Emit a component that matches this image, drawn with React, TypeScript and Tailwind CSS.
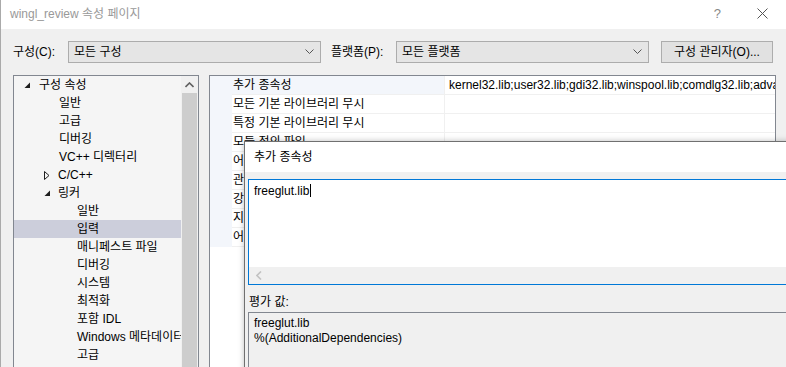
import React from "react";

type TreeItem = { label: string; indent: number; arrow?: "open" | "closed"; selected?: boolean };

const tree: TreeItem[] = [
  { label: "구성 속성", indent: 0, arrow: "open" },
  { label: "일반", indent: 1 },
  { label: "고급", indent: 1 },
  { label: "디버깅", indent: 1 },
  { label: "VC++ 디렉터리", indent: 1 },
  { label: "C/C++", indent: 1, arrow: "closed" },
  { label: "링커", indent: 1, arrow: "open" },
  { label: "일반", indent: 2 },
  { label: "입력", indent: 2, selected: true },
  { label: "매니페스트 파일", indent: 2 },
  { label: "디버깅", indent: 2 },
  { label: "시스템", indent: 2 },
  { label: "최적화", indent: 2 },
  { label: "포함 IDL", indent: 2 },
  { label: "Windows 메타데이터", indent: 2 },
  { label: "고급", indent: 2 },
];

const props = [
  { name: "추가 종속성", value: "kernel32.lib;user32.lib;gdi32.lib;winspool.lib;comdlg32.lib;advapi32.lib;shell32.lib;ole32.lib;oleaut32.lib" },
  { name: "모든 기본 라이브러리 무시", value: "" },
  { name: "특정 기본 라이브러리 무시", value: "" },
  { name: "모듈 정의 파일", value: "" },
  { name: "어셈블리에 모듈 추가", value: "" },
  { name: "관리되는 리소스 파일 포함", value: "" },
  { name: "강제 기호 참조", value: "" },
  { name: "지연 로드된 DLL", value: "" },
  { name: "어셈블리 링크 리소스", value: "" },
];

function Chevron() {
  return (
    <svg width="9" height="6" viewBox="0 0 9 6" className="shrink-0">
      <polyline points="0.5,0.5 4.5,4.5 8.5,0.5" fill="none" stroke="#555" strokeWidth="1" />
    </svg>
  );
}

function Select({ text, width }: { text: string; width: string }) {
  return (
    <div className={`${width} h-[22px] bg-[#e5e5e5] border border-[#acacac] flex items-center pl-[5px] pr-[6px]`}>
      <span className="flex-1">{text}</span>
      <Chevron />
    </div>
  );
}

function Arrow({ kind }: { kind: "open" | "closed" }) {
  if (kind === "open")
    return (
      <svg width="7" height="7" viewBox="0 0 7 7">
        <polygon points="6,0.5 6,6 0.5,6" fill="#1e1e1e" />
      </svg>
    );
  return (
    <svg width="6" height="9" viewBox="0 0 6 9">
      <polygon points="0.5,0.5 5,4.5 0.5,8.5" fill="none" stroke="#1e1e1e" strokeWidth="1" />
    </svg>
  );
}

export default function App() {
  return (
    <div className="relative w-[786px] h-[367px] overflow-hidden bg-[#f0f0f0] border-l border-[#aaaaaa] text-[12px] leading-none text-black font-['Liberation_Sans','Noto_Sans_CJK_KR',sans-serif]">
      {/* title bar */}
      <div className="h-[29px] bg-white flex items-center pl-[9px] pb-[2px] text-[#999999]">
        <span className="flex-1">wingl_review 속성 페이지</span>
        <span className="text-[#888] text-[13px] mr-[36px]">?</span>
        <svg width="11" height="11" viewBox="0 0 11 11" className="mr-[18px]">
          <path d="M0.5 0.5 L10.5 10.5 M10.5 0.5 L0.5 10.5" stroke="#555" strokeWidth="1" />
        </svg>
      </div>

      {/* config bar */}
      <div className="flex items-center pl-[12px] pt-[12px]">
        <span className="w-[55px]">구성(C):</span>
        <Select text="모든 구성" width="w-[253px]" />
        <span className="ml-[10px] w-[65px]">플랫폼(P):</span>
        <Select text="모든 플랫폼" width="w-[253px]" />
        <button className="ml-[12px] w-[112px] h-[22px] bg-[#e1e1e1] border border-[#adadad]">구성 관리자(O)...</button>
      </div>

      <div className="flex pl-[12px] pt-[12px] gap-[10px]">
        {/* tree */}
        <div className="w-[186px] h-[300px] border border-[#828790] bg-[#f5f5f5] flex shrink-0">
          <div className="flex-1 min-w-0 overflow-hidden">
            {tree.map((t, i) => (
              <div
                key={i}
                className={`h-[18px] flex items-center whitespace-nowrap overflow-hidden ${t.selected ? "bg-[#cccedb]" : ""}`}
              >
                {t.indent === 0 && (
                  <>
                    <span className="w-[10px]" />
                    <Arrow kind="open" />
                    <span className="ml-[8px]">{t.label}</span>
                  </>
                )}
                {t.indent === 1 && (t.arrow ? (
                  <>
                    <span className="w-[30px]" />
                    <span className="w-[8px] flex justify-start"><Arrow kind={t.arrow} /></span>
                    <span className="ml-[6px]">{t.label}</span>
                  </>
                ) : (
                  <span className="pl-[45px]">{t.label}</span>
                ))}
                {t.indent === 2 && <span className="pl-[63px]">{t.label}</span>}
              </div>
            ))}
          </div>
          <div className="w-[17px] shrink-0 bg-[#f0f0f0] flex flex-col">
            <div className="h-[17px] flex items-center justify-center">
              <svg width="9" height="6" viewBox="0 0 9 6">
                <polyline points="0.5,5 4.5,1 8.5,5" fill="none" stroke="#606060" strokeWidth="1.6" />
              </svg>
            </div>
            <div className="flex-1 mx-[1px] bg-[#cdcdcd]" />
          </div>
        </div>

        {/* property grid */}
        <div className="w-[567px] h-[300px] shrink-0 border border-[#828790] bg-white overflow-hidden">
          <div className="flex">
            <div className="w-[22px] shrink-0 bg-[#f3f6fb]" />
            <div className="flex-1 min-w-0">
              {props.map((p, i) => (
                <div key={i} className="flex h-[19px] border-b border-[#f0f0f0]">
                  <div className={`w-[213px] shrink-0 pl-[1px] flex items-center border-r border-[#f0f0f0] whitespace-nowrap overflow-hidden ${i === 0 ? "bg-[#f3f6fb]" : ""}`}>
                    {p.name}
                  </div>
                  <div className="flex-1 min-w-0 pl-[4px] flex items-center whitespace-nowrap overflow-hidden">{p.value}</div>
                </div>
              ))}
            </div>
          </div>
        </div>
      </div>

      {/* 추가 종속성 dialog */}
      <div className="absolute left-[243px] top-[141px] w-[600px] h-[260px] border border-[#707070] bg-[#f0f0f0] shadow-[0_0_6px_rgba(0,0,0,0.25)]">
        <div className="h-[30px] bg-white flex items-center pl-[9px]">추가 종속성</div>
        <div className="pt-[7px] pl-[3px]">
          <div className="h-[106px] border border-[#0078d7] bg-white flex flex-col">
            <div className="flex-1 pl-[5px] pt-[5px] flex items-start">
              <span>freeglut.lib</span>
              <span className="w-px h-[13px] bg-black ml-[1px] -mt-[1px]" />
            </div>
            <div className="h-[17px] bg-[#f0f0f0] flex items-center pl-[7px]">
              <svg width="6" height="9" viewBox="0 0 6 9">
                <polyline points="5,0.5 1,4.5 5,8.5" fill="none" stroke="#c2c2c2" strokeWidth="1.6" />
              </svg>
            </div>
          </div>
          <div className="h-[27px] flex items-center pt-[6px] pl-[1px]">평가 값:</div>
          <div className="h-[80px] border border-[#828790] bg-[#f0f0f0] pl-[5px] pt-[3px] leading-[15px]">
            <div>freeglut.lib</div>
            <div>%(AdditionalDependencies)</div>
          </div>
        </div>
      </div>
    </div>
  );
}
